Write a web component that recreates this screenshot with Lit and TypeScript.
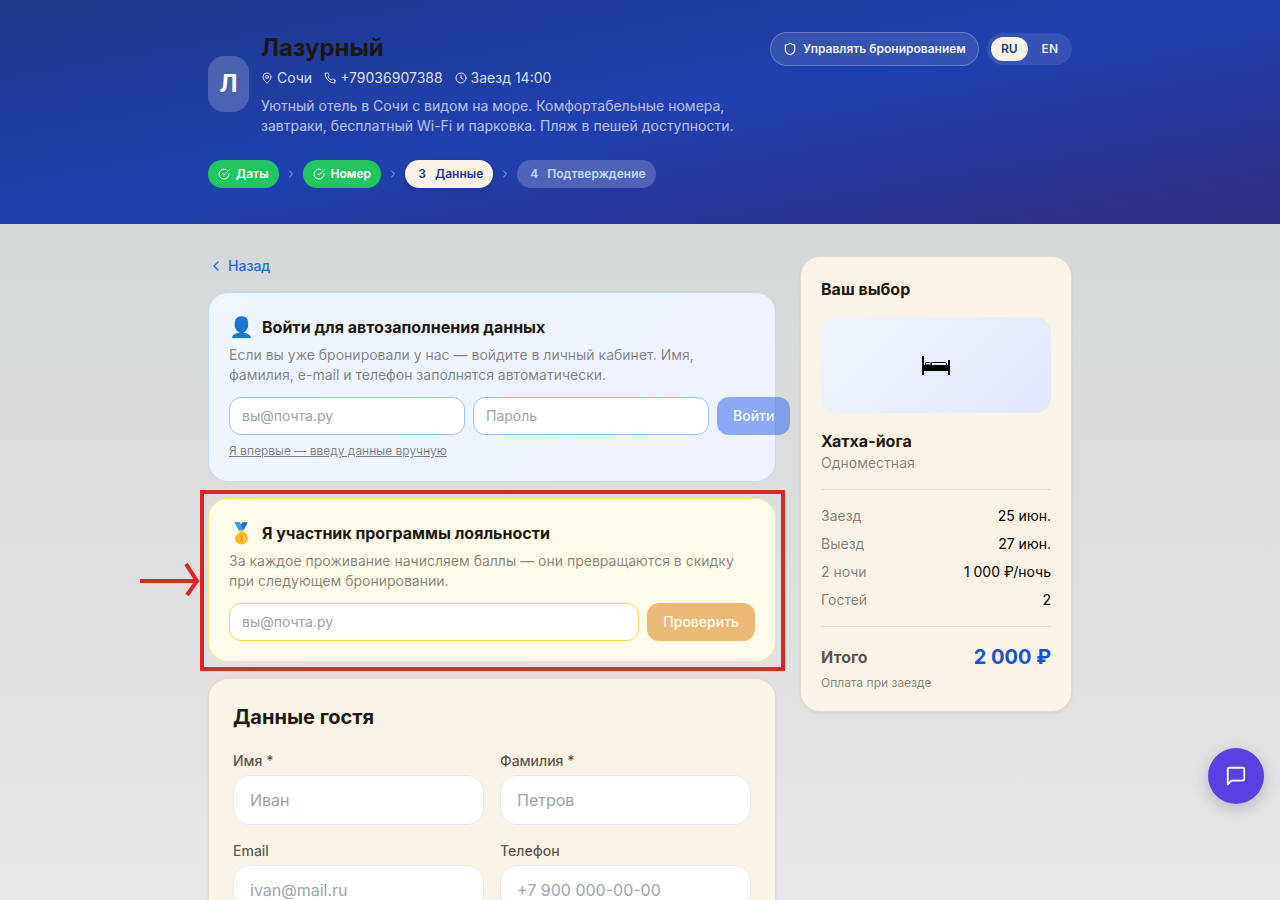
import { LitElement, html, css, svg, type TemplateResult } from "lit";
import { customElement, state } from "lit/decorators.js";

const icons: Record<string, TemplateResult> = {
  pin: svg`<path d="M20 10c0 5-5.5 10.2-7.4 11.8a1 1 0 0 1-1.2 0C9.500 20.200 4 15 4 10a8 8 0 0 1 16 0"/><circle cx="12" cy="10" r="3"/>`,
  phone: svg`<path d="M22 16.920v3a2 2 0 0 1-2.180 2 19.790 19.790 0 0 1-8.630-3.070 19.500 19.500 0 0 1-6-6 19.790 19.790 0 0 1-3.070-8.670A2 2 0 0 1 4.110 2h3a2 2 0 0 1 2 1.720 12.840 12.840 0 0 0 .7 2.810 2 2 0 0 1-.45 2.110L8.090 9.910a16 16 0 0 0 6 6l1.270-1.270a2 2 0 0 1 2.110-.45 12.840 12.840 0 0 0 2.810.7A2 2 0 0 1 22 16.920z"/>`,
  clock: svg`<circle cx="12" cy="12" r="10"/><path d="M12 6v6l4 2"/>`,
  shield: svg`<path d="M20 13c0 5-3.500 7.500-7.660 8.950a1 1 0 0 1-.67-.01C7.500 20.500 4 18 4 13V6a1 1 0 0 1 1-1c2 0 4.500-1.200 6.240-2.720a1.170 1.170 0 0 1 1.520 0C14.510 3.810 17 5 19 5a1 1 0 0 1 1 1z"/>`,
  check: svg`<path d="M22 11.080V12a10 10 0 1 1-5.930-9.140"/><path d="m22 4-10 10.010-3-3"/>`,
  right: svg`<path d="m9 18 6-6-6-6"/>`,
  left: svg`<path d="m15 18-6-6 6-6"/>`,
  chat: svg`<path d="M21 15a2 2 0 0 1-2 2H7l-4 4V5a2 2 0 0 1 2-2h14a2 2 0 0 1 2 2z"/>`,
};

const icon = (name: string, size: number) => html`<svg
  width=${size} height=${size} viewBox="0 0 24 24" fill="none" stroke="currentColor"
  stroke-width="2" stroke-linecap="round" stroke-linejoin="round" aria-hidden="true"
>${icons[name]}</svg>`;

const bed = html`<svg width="28" height="20" viewBox="0 0 28 20" aria-hidden="true">
  <path d="M0 1h2v9h24V5h2v15h-2v-4H2v4H0z" />
  <rect x="3.500" y="7.500" width="5" height="2.500" rx="1" fill="#eef2ff" stroke="#000" />
  <path d="M9.500 10V7.500H23a1.500 1.500 0 0 1 1.500 1.500v1" fill="#eef2ff" stroke="#000" />
</svg>`;

const steps = ["Даты", "Номер", "Данные", "Подтверждение"];

const stay = [
  ["Заезд", "25 июн."],
  ["Выезд", "27 июн."],
  ["2 ночи", "1 000 ₽/ночь"],
  ["Гостей", "2"],
];

const guestFields = [
  { id: "first", label: "Имя *", hint: "Иван", type: "text" },
  { id: "last", label: "Фамилия *", hint: "Петров", type: "text" },
  { id: "email", label: "Email", hint: "ivan@mail.ru", type: "email" },
  { id: "phone", label: "Телефон", hint: "+7 900 000-00-00", type: "tel" },
];

@customElement("app-root")
export class AppRoot extends LitElement {
  @state() private lang = "RU";
  private current = 2;

  static styles = css`
    :host {
      --ink: #1c1810;
      --muted: rgba(28, 24, 16, 0.54);
      --soft: rgba(28, 24, 16, 0.74);
      --cream: #faf4e6;
      --line: rgba(28, 24, 16, 0.1);
      display: block;
      min-height: 100vh;
      background: linear-gradient(#cdd3d4, #dadddc 450px, #e1e1e1 660px, #e8e8e8 900px) #e8e8e8;
      color: #000;
      font: 16px/24px Inter, "Liberation Sans", sans-serif;
    }
    *, *::before, *::after { box-sizing: border-box; }
    h1, h2, h3, p, dl, dd, ol { margin: 0; padding: 0; }
    svg { display: block; flex: none; }
    button, input { font: inherit; color: inherit; margin: 0; }
    button { border: 0; background: none; padding: 0; cursor: pointer; }
    input::placeholder { color: #9ca3af; opacity: 1; }
    .wrap { max-width: 896px; margin: 0 auto; padding: 0 16px; }

    .hero {
      background: linear-gradient(170deg, #1e3a8a 0%, #1e40af 50%, #312e81 100%);
      color: #fff;
      padding: 32px 0 36px;
    }
    .top { display: flex; justify-content: space-between; align-items: flex-start; gap: 12px; }
    .brand { display: flex; align-items: center; gap: 12px; }
    .logo {
      flex: none;
      width: 41px;
      height: 56px;
      border-radius: 16px;
      background: rgba(255, 255, 255, 0.2);
      display: grid;
      place-items: center;
      font-size: 24px;
      line-height: 32px;
      font-weight: 700;
    }
    h1 { font-size: 24px; line-height: 32px; font-weight: 700; color: var(--ink); }
    .contacts {
      display: flex;
      gap: 12px;
      margin-top: 4px;
      font-size: 14px;
      line-height: 20px;
      color: rgba(255, 255, 255, 0.85);
    }
    .contacts span { display: flex; align-items: center; gap: 4px; }
    .about {
      max-width: 492px;
      margin-top: 8px;
      font-size: 14px;
      line-height: 20px;
      color: rgba(255, 255, 255, 0.7);
    }
    .actions { display: flex; align-items: center; gap: 8px; flex: none; font-size: 12px; line-height: 16px; }
    .manage {
      display: flex;
      align-items: center;
      gap: 6px;
      padding: 8px 12px;
      border: 1px solid rgba(255, 255, 255, 0.25);
      border-radius: 999px;
      background: rgba(255, 255, 255, 0.1);
      font-weight: 600;
      color: rgba(255, 255, 255, 0.95);
    }
    .langs { display: flex; gap: 4px; padding: 4px; border-radius: 999px; background: rgba(255, 255, 255, 0.1); }
    .lang { padding: 4px 10px; border-radius: 999px; font-weight: 600; color: rgba(255, 255, 255, 0.9); }
    .lang.on { background: var(--cream); color: #1e3a8a; }

    .steps {
      display: flex;
      align-items: center;
      gap: 6px;
      margin-top: 24px;
      list-style: none;
      font-size: 12px;
      line-height: 16px;
      font-weight: 600;
      color: #93b4f5;
    }
    .steps li { display: flex; align-items: center; gap: 6px; }
    .pill { display: flex; align-items: center; gap: 6px; padding: 6px 10px; border-radius: 999px; }
    .pill.done { background: #22c55e; color: #fff; }
    .pill.now { background: var(--cream); color: #1e3a8a; box-shadow: 0 2px 4px rgba(0, 0, 0, 0.15); }
    .pill.next { background: rgba(255, 255, 255, 0.2); color: #bfdbfe; }
    .num { width: 14px; text-align: center; }

    .body {
      display: grid;
      grid-template-columns: repeat(3, minmax(0, 1fr));
      gap: 24px;
      align-items: start;
      padding-top: 32px;
      padding-bottom: 32px;
    }
    .main { grid-column: span 2; display: grid; gap: 16px; }
    .back {
      display: flex;
      align-items: center;
      gap: 4px;
      justify-self: start;
      font-size: 14px;
      line-height: 20px;
      font-weight: 500;
      color: #2563eb;
    }
    .card { border: 1px solid var(--line); border-radius: 20px; padding: 20px; min-width: 0; }
    .card.login { background: linear-gradient(135deg, #eff6ff, #eef2ff); border-color: #bfdbfe; }
    .card.loyal { position: relative; background: linear-gradient(135deg, #fffbeb, #fefce8); border-color: #fde68a; }
    .card.cream { background: var(--cream); box-shadow: 0 1px 3px rgba(0, 0, 0, 0.08); }
    .card.form { padding: 24px; }
    .head { display: flex; align-items: center; gap: 8px; }
    .head span { font-size: 20px; line-height: 28px; }
    h3 { font-size: 16px; line-height: 24px; font-weight: 700; color: var(--ink); }
    .text { margin-top: 4px; font-size: 14px; line-height: 20px; color: var(--muted); }
    .row { display: flex; gap: 8px; margin-top: 12px; font-size: 14px; line-height: 20px; }
    .row input {
      flex: 1;
      min-width: 236px;
      padding: 8px 12px;
      border: 1px solid #93c5fd;
      border-radius: 12px;
      background: #fff;
    }
    .loyal .row input { border-color: #fcd34d; }
    .go { padding: 8px 16px; border-radius: 12px; background: #2563eb; color: #fff; font-weight: 500; opacity: 0.5; }
    .loyal .go { background: #d97706; }
    .skip {
      display: block;
      margin: 8px 0 2px;
      font-size: 12px;
      line-height: 16px;
      text-decoration: underline;
      color: var(--muted);
    }
    .frame { position: absolute; inset: -9px -10px -10px -9px; border: 4px solid #dc2626; pointer-events: none; }
    .arrow { position: absolute; right: 100%; top: 50%; margin: -17px 9px 0 0; color: #dc2626; pointer-events: none; }

    h2 { font-size: 20px; line-height: 28px; font-weight: 700; color: var(--ink); }
    .fields { display: grid; grid-template-columns: 1fr 1fr; gap: 16px; margin-top: 20px; }
    .field { display: grid; gap: 4px; min-width: 0; }
    .field label { font-size: 14px; line-height: 20px; font-weight: 500; color: var(--soft); }
    .field input {
      width: 100%;
      padding: 12px 16px;
      border: 1px solid #e5e7eb;
      border-radius: 16px;
      background: #fff;
    }

    .photo {
      display: grid;
      place-items: center;
      height: 96px;
      margin: 16px 0;
      border-radius: 16px;
      background: linear-gradient(135deg, #eff6ff, #e0e7ff);
    }
    .kind { font-size: 14px; line-height: 20px; color: var(--muted); }
    dl {
      display: grid;
      gap: 8px;
      margin: 16px 0;
      padding: 16px 0;
      border: solid var(--line);
      border-width: 1px 0;
      font-size: 14px;
      line-height: 20px;
    }
    dl div, .total { display: flex; justify-content: space-between; align-items: center; }
    dt { color: var(--muted); }
    .total { font-weight: 700; color: var(--soft); }
    .total strong { font-size: 20px; line-height: 28px; font-weight: 700; color: #1d4ed8; }
    .note { margin-top: 4px; font-size: 12px; line-height: 16px; color: var(--muted); }

    .chat {
      position: fixed;
      right: 16px;
      bottom: 96px;
      width: 56px;
      height: 56px;
      display: grid;
      place-items: center;
      border-radius: 50%;
      background: #5b3fe0;
      color: #fff;
      box-shadow: 0 4px 16px rgba(30, 20, 80, 0.25);
    }
  `;

  private renderStep(label: string, i: number) {
    const kind = i < this.current ? "done" : i === this.current ? "now" : "next";
    return html`<li>
      ${i ? icon("right", 12) : ""}
      <span class="pill ${kind}">
        ${kind === "done" ? icon("check", 12) : html`<span class="num">${i + 1}</span>`}
        <span>${label}</span>
      </span>
    </li>`;
  }

  render() {
    return html`
      <header class="hero">
        <div class="wrap">
          <div class="top">
            <div class="brand">
              <div class="logo">Л</div>
              <div>
                <h1>Лазурный</h1>
                <div class="contacts">
                  <span>${icon("pin", 12)}Сочи</span>
                  <span>${icon("phone", 12)}+79036907388</span>
                  <span>${icon("clock", 12)}Заезд 14:00</span>
                </div>
                <p class="about">Уютный отель в Сочи с видом на море. Комфортабельные номера, завтраки, бесплатный Wi-Fi и парковка. Пляж в пешей доступности.</p>
              </div>
            </div>
            <div class="actions">
              <button class="manage">${icon("shield", 14)}Управлять бронированием</button>
              <div class="langs">
                ${["RU", "EN"].map((l) => html`<button
                  class="lang ${l === this.lang ? "on" : ""}"
                  @click=${() => (this.lang = l)}>${l}</button>`)}
              </div>
            </div>
          </div>
          <ol class="steps">${steps.map((s, i) => this.renderStep(s, i))}</ol>
        </div>
      </header>

      <div class="wrap body">
        <main class="main">
          <button class="back">${icon("left", 16)}Назад</button>

          <section class="card login">
            <div class="head"><span>👤</span><h3>Войти для автозаполнения данных</h3></div>
            <p class="text">Если вы уже бронировали у нас — войдите в личный кабинет. Имя, фамилия, e-mail и телефон заполнятся автоматически.</p>
            <div class="row">
              <input type="email" placeholder="вы@почта.ру" aria-label="E-mail" />
              <input type="password" placeholder="Пароль" aria-label="Пароль" />
              <button class="go">Войти</button>
            </div>
            <button class="skip">Я впервые — введу данные вручную</button>
          </section>

          <section class="card loyal">
            <div class="head"><span>🥇</span><h3>Я участник программы лояльности</h3></div>
            <p class="text">За каждое проживание начисляем баллы — они превращаются в скидку при следующем бронировании.</p>
            <div class="row">
              <input type="email" placeholder="вы@почта.ру" aria-label="E-mail участника" />
              <button class="go">Проверить</button>
            </div>
            <div class="frame"></div>
            <svg class="arrow" width="60" height="34" viewBox="0 0 60 34" fill="none" stroke="currentColor" stroke-width="4" aria-hidden="true">
              <path d="M0 18H57M46 1 57 18 47 32" />
            </svg>
          </section>

          <section class="card cream form">
            <h2>Данные гостя</h2>
            <div class="fields">
              ${guestFields.map((f) => html`<div class="field">
                <label for=${f.id}>${f.label}</label>
                <input id=${f.id} type=${f.type} placeholder=${f.hint} />
              </div>`)}
            </div>
          </section>
        </main>

        <aside class="card cream side">
          <h3>Ваш выбор</h3>
          <div class="photo">${bed}</div>
          <h3>Хатха-йога</h3>
          <p class="kind">Одноместная</p>
          <dl>${stay.map(([k, v]) => html`<div><dt>${k}</dt><dd>${v}</dd></div>`)}</dl>
          <div class="total"><span>Итого</span><strong>2 000 ₽</strong></div>
          <p class="note">Оплата при заезде</p>
        </aside>
      </div>

      <button class="chat" aria-label="Чат">${icon("chat", 22)}</button>
    `;
  }
}
